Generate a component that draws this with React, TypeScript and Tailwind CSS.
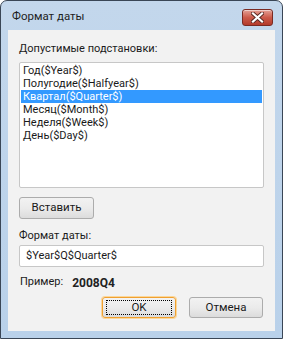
import React from 'react'

const ITEMS = [
  'Год($Year$)',
  'Полугодие($Halfyear$)',
  'Квартал($Quarter$)',
  'Месяц($Month$)',
  'Неделя($Week$)',
  'День($Day$)',
]

const font = { fontFamily: '"Segoe UI", Roboto, "Noto Sans", sans-serif' }

function CloseButton() {
  return (
    <div className="w-[31px] h-[17px] rounded-[3px] border border-[#7a2a22] bg-gradient-to-b from-[#e3a096] via-[#cc5a4a] to-[#b33a2a] flex items-center justify-center shadow-[inset_0_1px_0_rgba(255,255,255,0.5)]">
      <svg width="13" height="11" viewBox="0 0 13 11">
        <path d="M2 1.5 L11 9.5 M11 1.5 L2 9.5" stroke="#5a2a24" strokeWidth="4" strokeLinecap="square" />
        <path d="M2 1.5 L11 9.5 M11 1.5 L2 9.5" stroke="#ffffff" strokeWidth="2.2" strokeLinecap="square" />
      </svg>
    </div>
  )
}

function WinButton({ label, focused }: { label: string; focused?: boolean }) {
  return (
    <div
      className={
        'h-[21px] w-[74px] rounded-[3px] border bg-gradient-to-b from-[#f2f2f2] via-[#ebebeb] to-[#dcdcdc] flex items-center justify-center text-[11.5px] text-[#1a1a1a] ' +
        (focused ? 'border-[#f0a030] shadow-[0_0_0_1px_#fbd79a]' : 'border-[#acacac]')
      }
    >
      {focused ? (
        <div className="w-[66px] h-[15px] border border-dotted border-black flex items-center justify-center">
          {label}
        </div>
      ) : (
        label
      )}
    </div>
  )
}

export default function App() {
  return (
    <div
      className="w-[283px] h-[339px] rounded-t-[7px] border border-[#3a4656] bg-gradient-to-b from-[#c3d7ec] to-[#b9d1ea] flex flex-col overflow-hidden"
      style={font}
    >
      {/* title bar */}
      <div className="h-[29px] flex items-center justify-between pl-[11px] pr-[9px] pt-[3px] shrink-0">
        <span className="text-[11.5px] text-[#1e1e1e]">Формат даты</span>
        <CloseButton />
      </div>

      {/* client area */}
      <div className="mx-[7px] mb-[7px] flex-1 bg-[#f2f2f2] px-[11px] pt-[11px] flex flex-col">
        <p className="text-[11px] leading-[15px] text-[#1a1a1a] h-[21px]">Допустимые подстановки:</p>

        <div className="h-[126px] w-[245px] rounded-[2px] border border-[#c7c7c7] bg-white px-px pt-px">
          {ITEMS.map((it, i) => (
            <div
              key={it}
              className={
                'h-[13px] pl-[2px] text-[11px] leading-[13px] ' +
                (i === 2 ? 'bg-[#3399ff] text-white' : 'text-[#1a1a1a]')
              }
            >
              {it}
            </div>
          ))}
        </div>

        <div className="mt-[9px] h-[22px] w-[75px] rounded-[3px] border border-[#acacac] bg-gradient-to-b from-[#f2f2f2] via-[#ebebeb] to-[#dcdcdc] flex items-center justify-center text-[11.5px] text-[#1a1a1a]">
          Вставить
        </div>

        <p className="mt-[9px] text-[11px] leading-[15px] text-[#1a1a1a] h-[17px]">Формат даты:</p>

        <div className="h-[22px] w-[245px] rounded-[2px] border border-[#c7c7c7] bg-white flex items-center pl-[6px] text-[11px] text-[#1a1a1a]">
          $Year$Q$Quarter$
        </div>

        <div className="mt-[8px] h-[15px] flex items-center text-[11px] text-[#1a1a1a]">
          <span className="pl-px">Пример:</span>
          <span className="ml-[9px] font-bold text-[12px] text-[#222]">2008Q4</span>
        </div>

        <div className="mt-[7px] flex justify-end gap-[13px] pr-[1px]">
          <WinButton label="OK" focused />
          <WinButton label="Отмена" />
        </div>
      </div>
    </div>
  )
}
